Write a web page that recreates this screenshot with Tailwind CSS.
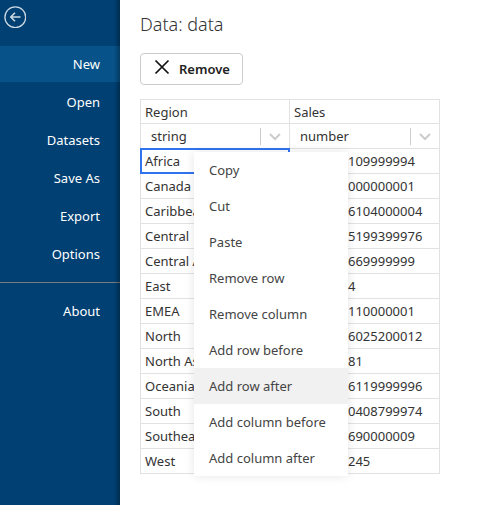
<!DOCTYPE html>
<html lang="en">
<head>
<meta charset="utf-8">
<meta name="viewport" content="width=device-width, initial-scale=1">
<title>Data</title>
<script src="https://cdn.jsdelivr.net/npm/@tailwindcss/browser@4"></script>
</head>
<body class="flex min-h-screen bg-white font-['Noto_Sans','Open_Sans',sans-serif] text-[13px] leading-5 text-[#333]">
<aside class="relative w-[120px] shrink-0 bg-[#004073] text-white">
  <button type="button" aria-label="Back" class="ml-1 mt-1.5 block size-[22px]">
    <svg viewBox="0 0 22 22" class="size-[22px]" fill="none" stroke="#ccd9e3"><circle cx="11.3" cy="11.2" r="10.4" stroke-width="1.3"/><path d="M16.5 11H6.8M11 6.8L6.8 11L11 15.2" stroke-width="1.6"/></svg>
  </button>
  <nav class="mt-[18px]">
    <ul class="flex flex-col gap-0.5 text-right">
      <li><a href="#" class="block bg-[#065289] px-5 py-2">New</a></li>
      <li><a href="#" class="block px-5 py-2">Open</a></li>
      <li><a href="#" class="block px-5 py-2">Datasets</a></li>
      <li><a href="#" class="block px-5 py-2">Save As</a></li>
      <li><a href="#" class="block px-5 py-2">Export</a></li>
      <li><a href="#" class="block px-5 py-2">Options</a></li>
      <li class="mt-2 border-t border-[#7c7c7c] pt-2.5"><a href="#" class="block px-5 py-2">About</a></li>
    </ul>
  </nav>
  <div class="pointer-events-none absolute inset-y-0 right-0 w-1.5 bg-gradient-to-r from-transparent to-black/30"></div>
</aside>
<main class="min-w-0 flex-1 px-5 pt-2.5">
  <h1 class="text-lg leading-7 font-light">Data: data</h1>
  <button type="button" class="mt-[15px] flex h-8 items-center gap-2 rounded border border-[#ccc] px-3 text-[13px] font-semibold text-[#222]">
    <svg viewBox="0 0 18 18" class="mb-1 size-[18px]" fill="none" stroke="#111" stroke-width="1.7"><path d="M2.5 2.5L15.5 15.5M15.5 2.5L2.5 15.5"/></svg>
    Remove
  </button>
  <div class="relative mt-3.5 w-[300px]">
    <table class="w-full table-fixed border-collapse text-left [&_td]:h-[25px] [&_td]:border [&_td]:border-[#e2e2e2] [&_td]:px-1 [&_td]:py-0 [&_td]:whitespace-nowrap [&_td]:overflow-hidden [&_td+td]:pl-[58px]">
      <colgroup><col class="w-[149px]"><col></colgroup>
      <thead>
        <tr>
          <th class="h-6 border border-[#e2e2e2] px-1 py-0 font-normal">Region</th>
          <th class="h-6 border border-[#e2e2e2] px-1 py-0 font-normal">Sales</th>
        </tr>
        <tr>
          <th class="h-[25px] border border-[#e2e2e2] p-0 font-normal">
            <div class="relative">
              <select aria-label="Region type" class="block h-6 w-full appearance-none bg-transparent pl-2.5 outline-none"><option>string</option><option>number</option></select>
              <svg viewBox="0 0 29 24" class="pointer-events-none absolute top-0 right-0 h-6 w-[29px]" fill="none" stroke="#ccc"><path d="M.5 4V21"/><path d="M10 10L15 15L20 10" stroke-width="2"/></svg>
            </div>
          </th>
          <th class="h-[25px] border border-[#e2e2e2] p-0 font-normal">
            <div class="relative">
              <select aria-label="Sales type" class="block h-6 w-full appearance-none bg-transparent pl-2.5 outline-none"><option>number</option><option>string</option></select>
              <svg viewBox="0 0 29 24" class="pointer-events-none absolute top-0 right-0 h-6 w-[29px]" fill="none" stroke="#ccc"><path d="M.5 4V21"/><path d="M10 10L15 15L20 10" stroke-width="2"/></svg>
            </div>
          </th>
        </tr>
      </thead>
      <tbody>
        <tr><td>Africa</td><td>109999994</td></tr>
        <tr><td>Canada</td><td>000000001</td></tr>
        <tr><td>Caribbean</td><td>6104000004</td></tr>
        <tr><td>Central</td><td>5199399976</td></tr>
        <tr><td>Central Asia</td><td>669999999</td></tr>
        <tr><td>East</td><td>4</td></tr>
        <tr><td>EMEA</td><td>110000001</td></tr>
        <tr><td>North</td><td>6025200012</td></tr>
        <tr><td>North Asia</td><td>81</td></tr>
        <tr><td>Oceania</td><td>6119999996</td></tr>
        <tr><td>South</td><td>0408799974</td></tr>
        <tr><td>Southeast Asia</td><td>690000009</td></tr>
        <tr><td>West</td><td>245</td></tr>
      </tbody>
    </table>
    <div class="pointer-events-none absolute top-[49px] left-0 h-[26px] w-[150px] border-2 border-[#2f73ee]"></div>
    <div role="menu" class="absolute top-[53px] left-[54px] w-[154px] bg-white text-[13px] text-[#444] shadow-[0_0_10px_rgba(0,0,0,0.1)]">
      <button type="button" role="menuitem" class="block h-9 w-full px-[15px] text-left whitespace-nowrap">Copy</button>
      <button type="button" role="menuitem" class="block h-9 w-full px-[15px] text-left whitespace-nowrap">Cut</button>
      <button type="button" role="menuitem" class="block h-9 w-full px-[15px] text-left whitespace-nowrap">Paste</button>
      <button type="button" role="menuitem" class="block h-9 w-full px-[15px] text-left whitespace-nowrap">Remove row</button>
      <button type="button" role="menuitem" class="block h-9 w-full px-[15px] text-left whitespace-nowrap">Remove column</button>
      <button type="button" role="menuitem" class="block h-9 w-full px-[15px] text-left whitespace-nowrap">Add row before</button>
      <button type="button" role="menuitem" class="block h-9 w-full bg-[#f1f1f1] px-[15px] text-left whitespace-nowrap">Add row after</button>
      <button type="button" role="menuitem" class="block h-9 w-full px-[15px] text-left whitespace-nowrap">Add column before</button>
      <button type="button" role="menuitem" class="block h-9 w-full px-[15px] text-left whitespace-nowrap">Add column after</button>
    </div>
  </div>
</main>
</body>
</html>
